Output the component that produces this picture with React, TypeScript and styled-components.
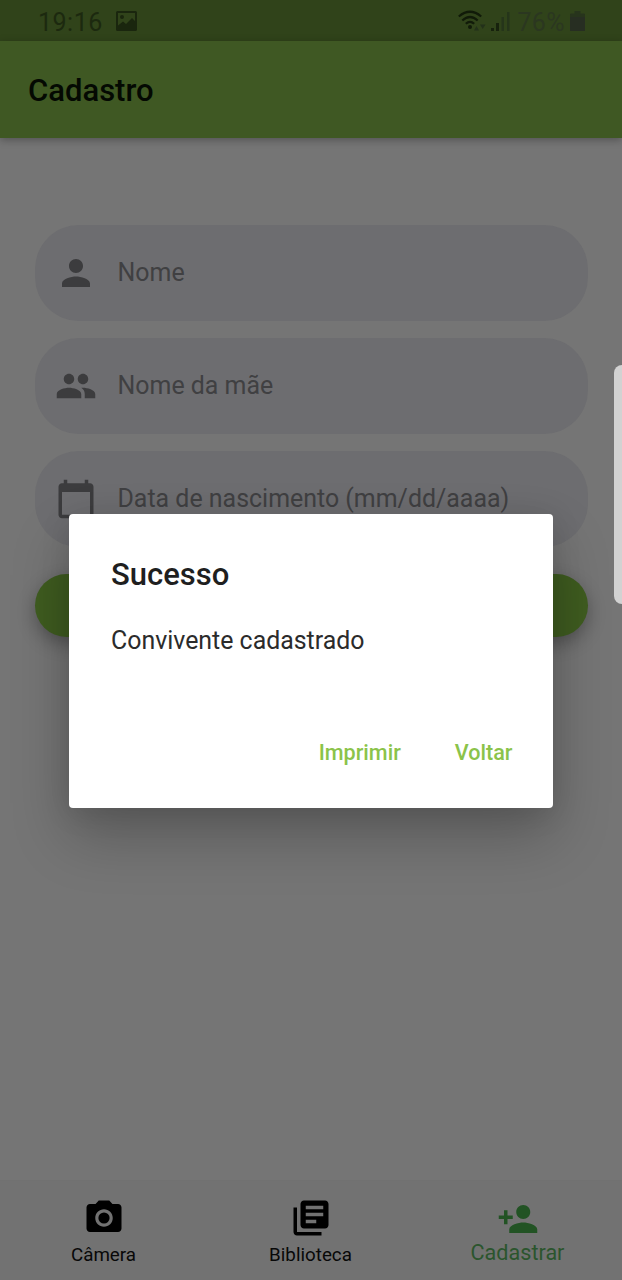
import React from 'react';
import styled, { createGlobalStyle } from 'styled-components';
import { MdPerson, MdPeople, MdCalendarToday, MdPhotoCamera, MdLibraryBooks, MdPersonAdd } from 'react-icons/md';

const Global = createGlobalStyle`
  * { box-sizing: border-box; }
  body { margin: 0; font-family: Roboto, "Liberation Sans", sans-serif; }
`;
const Screen = styled.div`
  position: relative; width: 622px; height: 1280px; overflow: hidden;
  display: flex; flex-direction: column; background: #757575;
`;
const StatusBar = styled.div`
  height: 41px; flex: none; background: #30431a; display: flex; align-items: center;
  justify-content: space-between; padding: 1px 37px 0 38px; color: #1c290f;
`;
const StatusGroup = styled.div`display: flex; align-items: center;`;
const Clock = styled.span`font-size: 25px; line-height: 30px; letter-spacing: 0.5px; margin: 3px 13px 0 0;`;
const Percent = styled.span`font-size: 25px; line-height: 30px; color: #2b3720; margin: 3px 5px 0 7px; letter-spacing: 0.4px;`;
const AppBar = styled.header`
  height: 97px; flex: none; background: #3f5823; padding: 2px 28px 0; display: flex; align-items: center;
  box-shadow: 0 2px 8px rgba(0,0,0,.3); z-index: 1;
`;
const AppTitle = styled.h1`margin: 0; font-size: 31px; font-weight: 500; color: #040902;`;
const Form = styled.main`flex: 1; padding: 87px 34.5px 0; display: flex; flex-direction: column; gap: 17px;`;
const Field = styled.div`
  height: 96px; flex: none; border-radius: 44px; background: #6d6d70; color: #3c3c3e;
  display: flex; align-items: center; padding-left: 20.5px; gap: 20.5px; font-size: 24.94px;
`;
const Placeholder = styled.span`margin-top: -2px; color: #404042;`;
const Submit = styled.button`
  height: 63px; flex: none; margin-top: 10px; border: 0; border-radius: 32px; background: #3f5c20;
  box-shadow: 0 7px 18px rgba(0,0,0,.3);
`;
const Tabs = styled.nav`
  height: 100px; flex: none; background: #727272; display: grid; grid-template-columns: repeat(3, 207px);
  border-top: 1px solid #717171;
`;
const Tab = styled.div<{ $active?: boolean }>`
  display: flex; flex-direction: column; align-items: center; padding-top: ${p => (p.$active ? 17 : 16)}px;
  color: ${p => (p.$active ? '#225324' : '#000')};
`;
const TabLabel = styled.span<{ $active?: boolean }>`
  font-size: ${p => (p.$active ? 21.6 : 18.8)}px; line-height: 26px; margin-top: ${p => (p.$active ? 0 : 3)}px;
  color: ${p => (p.$active ? '#2b552d' : '#080808')};
`;
const Dialog = styled.section`
  position: absolute; z-index: 2; left: 69px; top: 514px; width: 484px; height: 294px; background: #fff;
  border-radius: 4px; padding: 43px 40.5px 40px 42px; display: flex; flex-direction: column;
  box-shadow: 0 28px 58px rgba(0,0,0,.24), 0 4px 30px rgba(0,0,0,.1);
`;
const DialogTitle = styled.h2`margin: 0; font-size: 31px; line-height: 36px; font-weight: 500; color: #1f1f1f;`;
const DialogText = styled.p`margin: 32px 0 0; font-size: 24.9px; line-height: 32px; color: #2b2b2b;`;
const Actions = styled.div`margin-top: auto; display: flex; justify-content: flex-end; gap: 54px;`;
const Action = styled.button`
  border: 0; padding: 0; background: none; font: 500 21.6px/30px Roboto, "Liberation Sans", sans-serif; color: #8bc34a;
`;
const EdgeHandle = styled.div`
  position: absolute; z-index: 3; right: -8px; top: 365px; width: 16px; height: 239px; border-radius: 8px; background: #d2d2d2;
`;

const Picture = () => (
  <svg width="21" height="20" viewBox="0 0 21 20">
    <path fill="#1a260e" fillRule="evenodd" d="M1.5 0h18A1.5 1.5 0 0 1 21 1.5v17a1.5 1.5 0 0 1-1.5 1.5h-18A1.5 1.5 0 0 1 0 18.5v-17A1.5 1.5 0 0 1 1.5 0ZM2 2v12.5l5-4 3 2.5 6-6 3 3V2ZM6 4a2 2 0 1 1 0 4 2 2 0 0 1 0-4Z" />
  </svg>
);
const Wifi = () => (
  <svg width="33" height="22" viewBox="0 0 33 22">
    <g fill="none" stroke="#111b09" strokeWidth="2.2">
      <path d="M.8 6.5Q12 -3 23.2 6.5M4.3 10.5Q12 3.5 19.7 10.5M7.8 13.8Q12 10 16.2 13.8" />
    </g>
    <circle cx="12" cy="17" r="2" fill="#111b09" />
    <path d="M16 20.5l2.5-4.5 2.5 4.5zM22 14.5h5.5L24.7 19z" fill="#23311a" />
  </svg>
);
const Signal = () => (
  <svg width="19" height="20" viewBox="0 0 19 20">
    <path d="M0 17h3v3H0zM5 12h3v8H5z" fill="#17220d" />
    <path d="M10.5 6h2.5v14h-2.5zM16 1h2.5v19H16z" fill="#25351a" />
  </svg>
);
const Battery = () => (
  <svg width="15" height="20" viewBox="0 0 15 20">
    <path d="M4.5 0h6v2.5H14A1 1 0 0 1 15 3.5V19a1 1 0 0 1-1 1H1a1 1 0 0 1-1-1V3.5A1 1 0 0 1 1 2.5h3.5z" fill="#27341c" />
    <path d="M0 6h15v13a1 1 0 0 1-1 1H1a1 1 0 0 1-1-1z" fill="#272e22" />
  </svg>
);

export default function App() {
  return (
    <Screen>
      <Global />
      <StatusBar>
        <StatusGroup><Clock>19:16</Clock><Picture /></StatusGroup>
        <StatusGroup><Wifi /><Signal /><Percent>76%</Percent><Battery /></StatusGroup>
      </StatusBar>
      <AppBar><AppTitle>Cadastro</AppTitle></AppBar>
      <Form>
        <Field><MdPerson size={42} /><Placeholder>Nome</Placeholder></Field>
        <Field><MdPeople size={42} /><Placeholder>Nome da mãe</Placeholder></Field>
        <Field><MdCalendarToday size={42} /><Placeholder>Data de nascimento (mm/dd/aaaa)</Placeholder></Field>
        <Submit />
      </Form>
      <Tabs>
        <Tab><MdPhotoCamera size={42} /><TabLabel>Câmera</TabLabel></Tab>
        <Tab><MdLibraryBooks size={42} /><TabLabel>Biblioteca</TabLabel></Tab>
        <Tab $active><MdPersonAdd size={42} /><TabLabel $active>Cadastrar</TabLabel></Tab>
      </Tabs>
      <Dialog>
        <DialogTitle>Sucesso</DialogTitle>
        <DialogText>Convivente cadastrado</DialogText>
        <Actions><Action>Imprimir</Action><Action>Voltar</Action></Actions>
      </Dialog>
      <EdgeHandle />
    </Screen>
  );
}
